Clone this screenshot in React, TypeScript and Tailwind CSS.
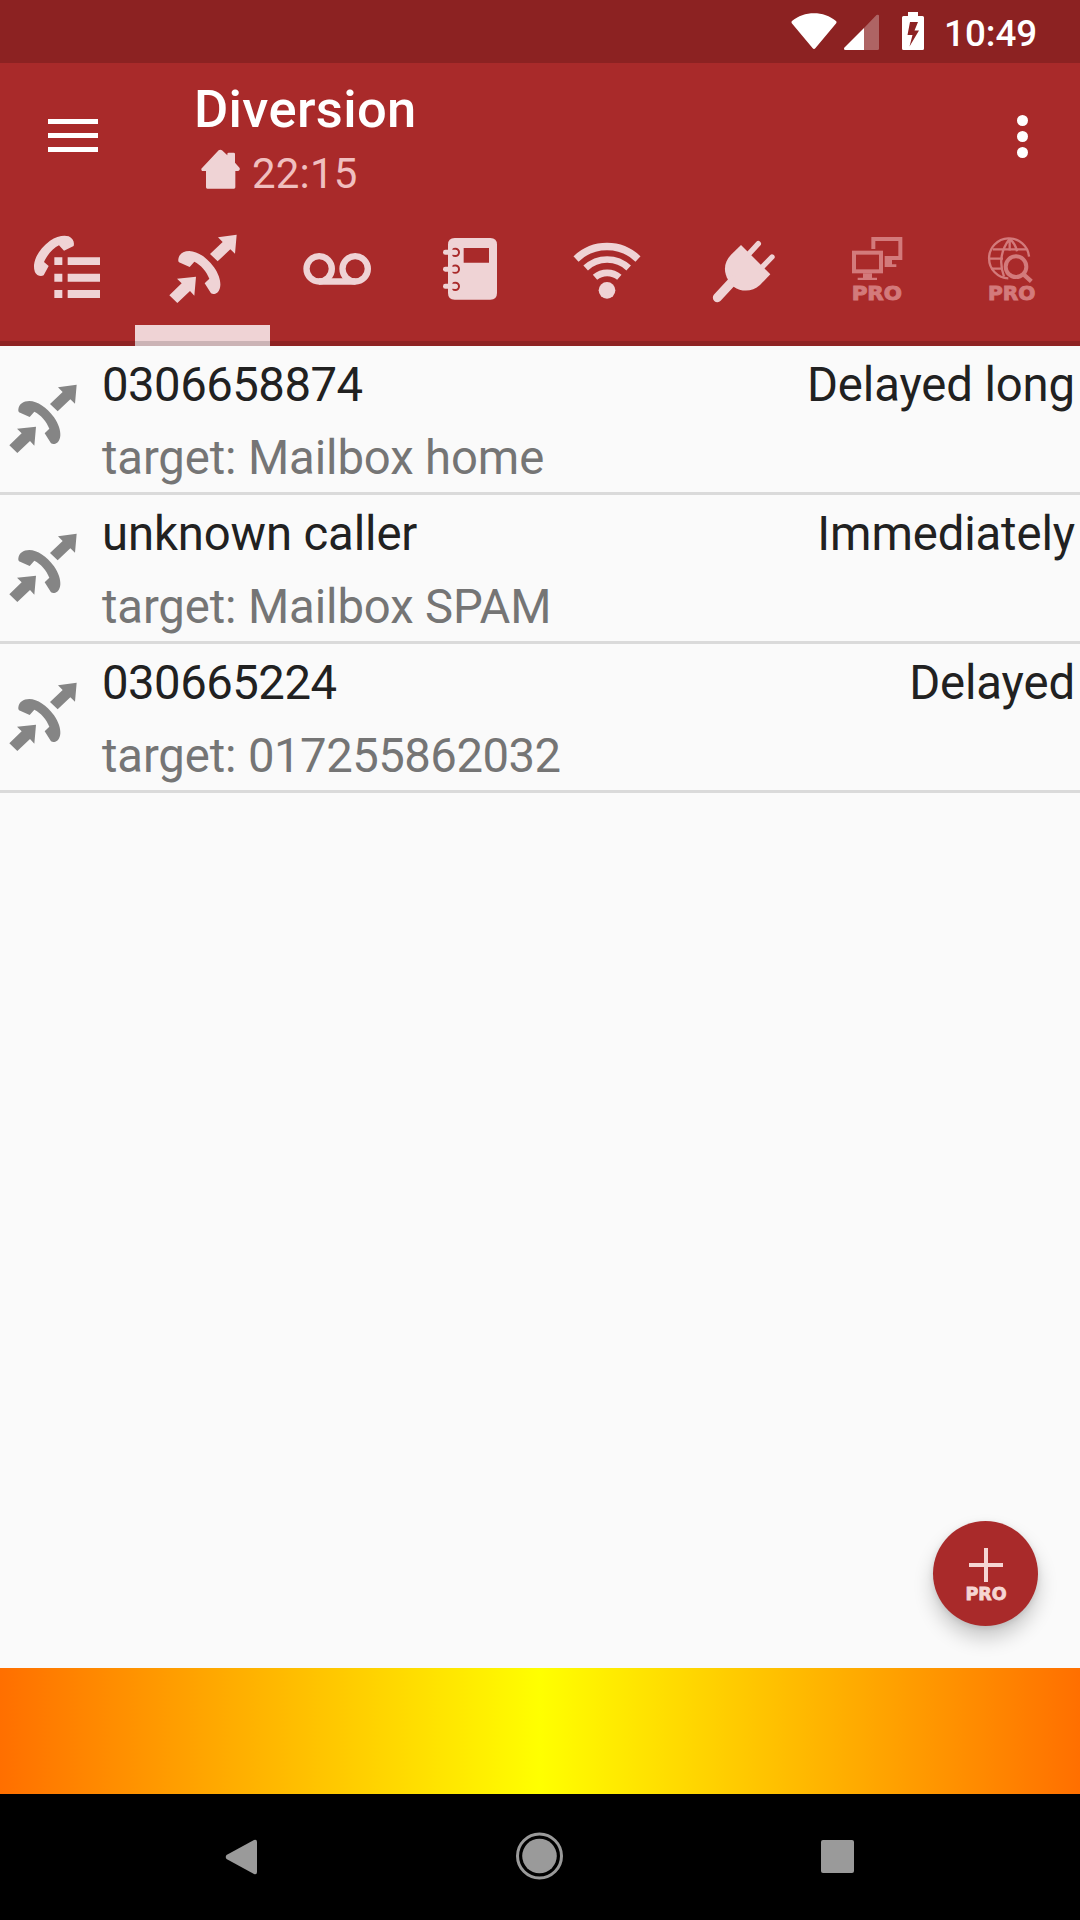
import type { ReactNode } from "react";

const diversions = [
  { number: "0306658874", target: "Mailbox home", mode: "Delayed long" },
  { number: "unknown caller", target: "Mailbox SPAM", mode: "Immediately" },
  { number: "030665224", target: "017255862032", mode: "Delayed" },
];

// digits are set a little tighter than words
const tracking = (text: string) =>
  /^\d+$/.test(text) ? "tracking-[-0.5px]" : "tracking-[-0.12px]";

const Glyph = ({
  x = 96,
  className = "",
  children,
}: {
  x?: number;
  className?: string;
  children: ReactNode;
}) => (
  <svg
    className={`size-[72px] shrink-0 ${className}`}
    viewBox={`${x} 69 216 216`}
    fill="currentColor"
  >
    {children}
  </svg>
);

const ProLabel = ({ x, width }: { x: number; width: number }) => (
  <text
    x={x}
    y="269"
    fontSize="60"
    fontWeight="700"
    textLength={width}
    lengthAdjust="spacingAndGlyphs"
    stroke="currentColor"
    strokeWidth="3"
    className="font-['DejaVu_Sans']"
  >
    PRO
  </text>
);

const DivertIcon = ({ className }: { className?: string }) => (
  <Glyph x={501} className={className}>
    <path d="M535 148C537 132 550 123 568 123C592 124 620 141 642 172C656 192 662 212 661 226C660 240 654 249 646 251Q639 253 633 250L614 220L628 206C620 185 602 164 583 155L569 171L537 157Q534 154 535 148Z" />
    <path d="M588 200L583 257L570 243L532 279L508 256L545 220L531 206Z" />
    <path d="M710 74L705 131L691 118L653 154L630 132L668 96L654 82Z" />
  </Glyph>
);

const CallListIcon = () => (
  <Glyph>
    <path d="M102 165C105 140 120 115 150 92C170 78 193 74 206 79C219 85 224 96 221 108L192 122L177 106C160 113 141 135 132 156L146 168L131 196Q122 200 112 195Q101 187 102 165Z" />
    <path d="M163 142h24v23h-24zM203 142h97v23h-97zM163 191h24v24h-24zM203 191h97v24h-97zM163 240h24v24h-24zM203 240h97v24h-97z" />
  </Glyph>
);

const VoicemailIcon = () => (
  <Glyph x={66}>
    <g fill="none" stroke="currentColor" strokeWidth="19">
      <circle cx="117.500" cy="176.500" r="38" />
      <circle cx="225.500" cy="176.500" r="38" />
      <path d="M117 214.500H226" />
    </g>
  </Glyph>
);

const NotebookIcon = () => (
  <Glyph x={471}>
    <path
      fillRule="evenodd"
      d="M524 84h107q20 0 20 20v145q0 20-20 20H524q-20 0-20-20V104q0-20 20-20ZM551 114v44h76v-44Z"
    />
    {[127, 177.5, 229].map((y) => (
      <g key={y}>
        <circle cx="526" cy={y} r="11" fill="none" stroke="#a92a2a" strokeWidth="6" />
        <rect x="489" y={y - 7.5} width="43" height="15" rx="7" />
        <rect x="507" y={y - 15} width="10" height="30" />
      </g>
    ))}
  </Glyph>
);

const WifiIcon = () => (
  <Glyph x={66}>
    <g fill="none" stroke="currentColor" strokeWidth="20">
      <path strokeWidth="22" d="M78 147A134 134 0 0 1 264 147" />
      <path d="M107 174A94 94 0 0 1 236 174" />
      <path d="M135 202A56 56 0 0 1 208 202" />
    </g>
    <circle cx="171" cy="241" r="25" />
  </Glyph>
);

const PlugIcon = () => (
  <Glyph x={471}>
    <path d="M573 105L661 193L630 225C607 246 575 247 551 230L535 211C519 185 522 155 543 134Z" />
    <g stroke="currentColor" strokeLinecap="round">
      <path strokeWidth="16" d="M625 101L592 137M666 141L632 176" />
      <path strokeWidth="27" d="M502 263L550 211" />
    </g>
  </Glyph>
);

const ComputersIcon = () => (
  <Glyph x={66}>
    <g fill="none" stroke="currentColor" strokeWidth="12">
      <path d="M160 117V87H241V144H194" />
      <rect x="102" y="128" width="81" height="56" />
    </g>
    <path d="M194 150h22v13h13v8h-35zM129 190h27v13h15v7h-58v-7h16z" />
    <ProLabel x={95} width={151} />
  </Glyph>
);

const GlobeSearchIcon = () => (
  <Glyph x={471}>
    <g fill="none" stroke="currentColor" strokeWidth="7">
      <path d="M565 205A60 60 0 1 1 627 140" />
      <path d="M518 118H619M508 146H549M514 176H545M569 86V122M569 86Q529 138 552 200M569 86Q587 103 591 124" />
      <circle cx="588" cy="170" r="31" strokeWidth="12" />
      <path strokeWidth="13" d="M608 191L634 214" />
    </g>
    <ProLabel x={504} width={142} />
  </Glyph>
);

const tabs = [
  { id: "calls", icon: <CallListIcon /> },
  { id: "diversion", icon: <DivertIcon />, active: true },
  { id: "voicemail", icon: <VoicemailIcon /> },
  { id: "phonebook", icon: <NotebookIcon /> },
  { id: "wifi", icon: <WifiIcon /> },
  { id: "plug", icon: <PlugIcon /> },
  { id: "computers", icon: <ComputersIcon />, pro: true },
  { id: "search", icon: <GlobeSearchIcon />, pro: true },
];

const StatusBar = () => (
  <div className="flex h-[63px] items-start bg-[#8c2222] pl-[790px] text-white">
    <svg className="mt-3 h-10 w-[136px] shrink-0" viewBox="0 0 136 40" fill="currentColor">
      <path d="M2 9C14-1.500 34-1.500 46 9Q47 10 46 11.500L25.500 36Q24 38 22.500 36L2 11.500Q1 10 2 9Z" />
      <path
        opacity=".3"
        d="M86.500 3Q89 2 89 4V36.500Q89 38 87.500 38H74V16Z"
      />
      <path d="M74 16V38H55.500Q53 37.500 54.500 35.500Z" />
      <path
        fillRule="evenodd"
        d="M118 0h10v4h4.500q1.500 0 1.500 1.500v31q0 1.500-1.500 1.500h-19q-1.500 0-1.500-1.500v-31q0-1.500 1.500-1.500h4.500ZM120 10l-2.500 13h5l-3 11.500L129 18.500h-4.500l3.500-8.500Z"
      />
    </svg>
    <span className="ml-[18px] mt-3 text-[36.75px] font-medium leading-[43px]">10:49</span>
  </div>
);

const Toolbar = () => (
  <div className="flex h-[147px] items-start text-white">
    <div className="ml-12 mt-14 flex flex-col gap-[9px]">
      <span className="h-[5px] w-[50px] bg-white" />
      <span className="h-[5px] w-[50px] bg-white" />
      <span className="h-[5px] w-[50px] bg-white" />
    </div>
    <div className="ml-24 flex flex-col">
      <h1 className="mt-[15px] text-[52.5px] font-medium leading-[62px] tracking-[0.35px]">
        Diversion
      </h1>
      <div className="flex items-start">
        <svg className="ml-[7px] mt-[9px] h-[41px] w-10 text-[#efd3d5]" viewBox="603 268 120 123" fill="currentColor">
          <path d="M604 327L656 272Q661 268 666 272L682 287V283Q682 279 686 279H701Q705 279 705 283V309L719 325Q721 333 713 334H706V383Q706 387 702 387H622Q618 387 618 383V334H610Q603 334 604 327Z" />
        </svg>
        <span className="ml-[11px] mt-[9px] text-[42px] leading-[49px] tracking-[0.2px] text-[#f0bfbf]">
          22:15
        </span>
      </div>
    </div>
    <div className="ml-auto mr-[52px] mt-[52px] flex flex-col gap-[5px]">
      <span className="size-[11px] rounded-full bg-white" />
      <span className="size-[11px] rounded-full bg-white" />
      <span className="size-[11px] rounded-full bg-white" />
    </div>
  </div>
);

const TabBar = () => (
  <nav className="relative grid h-[136px] grid-cols-8">
    {tabs.map((tab) => (
      <div
        key={tab.id}
        className={`flex flex-col justify-between pt-[23px] ${tab.pro ? "text-[#d37a7b]" : "text-[#efd3d5]"}`}
      >
        <div className="pl-8">{tab.icon}</div>
        {tab.active && <div className="h-[21px] bg-[#efd3d5]" />}
      </div>
    ))}
    <div className="absolute inset-x-0 bottom-0 h-[5px] bg-black/15" />
  </nav>
);

const DiversionRow = ({
  number,
  target,
  mode,
}: {
  number: string;
  target: string;
  mode: string;
}) => (
  <li className="flex h-[149px] items-center border-b-[3px] border-[#dadada] pl-[7px] pr-[5px] text-[47.25px]">
    <DivertIcon className="text-[#858585]" />
    <div className="ml-[23px] flex-1 self-start">
      <div className="mt-[11px] flex justify-between leading-[57px] text-[#212121]">
        <span className={tracking(number)}>{number}</span>
        <span className={tracking(mode)}>{mode}</span>
      </div>
      <p className="mt-4 leading-[57px] tracking-[-0.12px] text-[#757575]">
        target: <span className={tracking(target)}>{target}</span>
      </p>
    </div>
  </li>
);

export default function App() {
  return (
    <div className="relative flex h-[1920px] w-[1080px] flex-col overflow-hidden bg-[#fafafa] font-[Roboto,sans-serif]">
      <StatusBar />
      <header className="bg-[#a92a2a]">
        <Toolbar />
        <TabBar />
      </header>
      <main className="flex-1">
        <ul>
          {diversions.map((item) => (
            <DiversionRow key={item.number} {...item} />
          ))}
        </ul>
      </main>
      <button className="absolute left-[933px] top-[1521px] flex size-[105px] flex-col items-center rounded-full bg-[#a92a2a] text-[#f6d5d3] shadow-[0_12px_20px_rgba(0,0,0,0.2),0_2px_6px_rgba(0,0,0,0.1)]">
        <svg className="mt-[27px] size-[34px] shrink-0" viewBox="0 0 34 34" stroke="currentColor" strokeWidth="4">
          <path d="M17 0V34M0 17H34" />
        </svg>
        <span className="ml-px mt-[2px] font-['DejaVu_Sans'] text-[17.5px] font-bold leading-5 [-webkit-text-stroke:0.8px_currentColor]">
          PRO
        </span>
      </button>
      <div className="flex h-[126px] items-center justify-end bg-[linear-gradient(90deg,#ff6f00,#ffff00_50%,#ff6f00)] pr-[256px]">
        <p className="text-[44px] text-black/[0.02]">
          with <b>BoxToGo Pro</b>
        </p>
      </div>
      <footer className="flex h-[126px] items-start bg-black pl-[225px] text-[#9a9a9a]">
        <svg className="mt-11 h-[38px] w-[33px]" viewBox="0 0 33 38" fill="currentColor">
          <path d="M1.500 17L29 2Q32 1 32 4V34Q32 37 29 36L1.500 21Q0 19 1.500 17Z" />
        </svg>
        <svg className="ml-[257px] mt-[38px] size-12" viewBox="0 0 48 48">
          <circle cx="24.500" cy="24" r="22" fill="none" stroke="currentColor" strokeWidth="3" />
          <circle cx="24.500" cy="24" r="17.300" fill="currentColor" />
        </svg>
        <span className="ml-[258px] mt-[46px] h-[33px] w-[33px] rounded-[2px] bg-[#9a9a9a]" />
      </footer>
    </div>
  );
}
